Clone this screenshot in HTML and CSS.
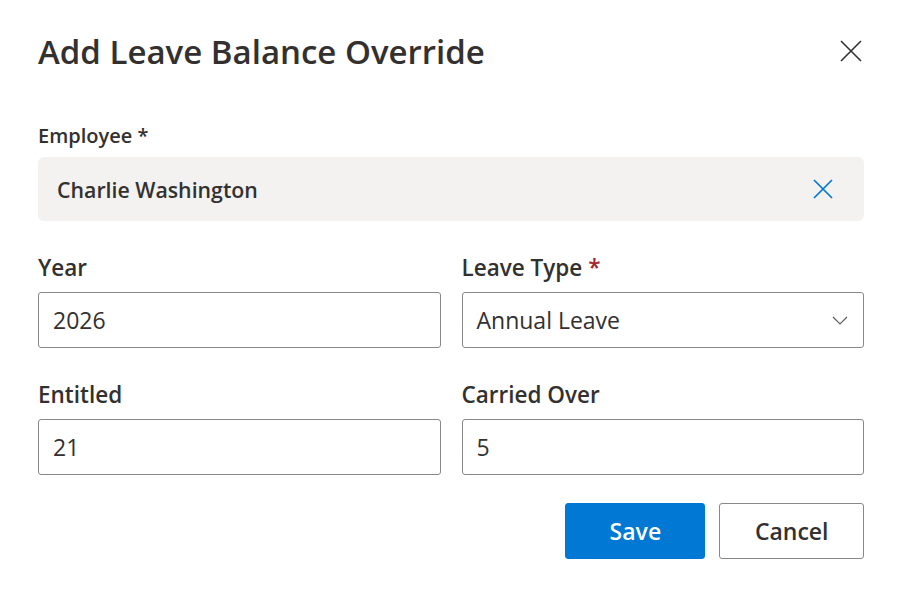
FILE: index.html
```html
<!DOCTYPE html>
<html lang="en">
<head>
    <meta charset="UTF-8">
    <meta name="viewport" content="width=device-width, initial-scale=1.0">
    <title>Add Leave Balance Override</title>
    <link rel="stylesheet" href="styles.css">
</head>
<body>
    <div class="dialog">
        <div class="dialog-header">
            <h1>Add Leave Balance Override</h1>
            <button class="close-btn" aria-label="Close">
                <svg width="22" height="22" viewBox="0 0 22 22"><path d="M1 1 L21 21 M21 1 L1 21" stroke="#323130" stroke-width="1.6" fill="none"/></svg>
            </button>
        </div>

        <div class="field">
            <label class="label-small">Employee *</label>
            <div class="picker">
                <span class="picker-value">Charlie Washington</span>
                <svg width="20" height="20" viewBox="0 0 20 20"><path d="M1 1 L19 19 M19 1 L1 19" stroke="#0078d4" stroke-width="1.7" fill="none"/></svg>
            </div>
        </div>

        <div class="row">
            <div class="field">
                <label>Year</label>
                <div class="input">2026</div>
            </div>
            <div class="field">
                <label>Leave Type <span class="required">*</span></label>
                <div class="input dropdown">
                    <span>Annual Leave</span>
                    <svg width="16" height="9" viewBox="0 0 16 9"><path d="M1 1 L8 8 L15 1" stroke="#605e5c" stroke-width="1.2" fill="none"/></svg>
                </div>
            </div>
        </div>

        <div class="row">
            <div class="field">
                <label>Entitled</label>
                <div class="input">21</div>
            </div>
            <div class="field">
                <label>Carried Over</label>
                <div class="input">5</div>
            </div>
        </div>

        <div class="actions">
            <button class="btn primary">Save</button>
            <button class="btn">Cancel</button>
        </div>
    </div>
</body>
</html>
```

FILE: styles.css
```css
body {
    margin: 0;
    background: #fff;
    font-family: "Open Sans", "Noto Sans", sans-serif;
    color: #323130;
}

.dialog {
    padding: 26px 36px 0 38px;
}

.dialog-header {
    display: flex;
    justify-content: space-between;
    align-items: center;
    height: 50px;
    margin-bottom: 46px;
}

.dialog-header h1 {
    margin: 0;
    font-size: 33px;
    font-weight: 600;
}

.close-btn {
    background: none;
    border: none;
    padding: 0;
    margin-right: 2px;
    display: flex;
}

.field {
    display: flex;
    flex-direction: column;
}

label {
    font-size: 22.5px;
    font-weight: 600;
    line-height: 32px;
    margin-bottom: 8px;
}

.label-small {
    font-size: 20px;
    line-height: 28px;
    margin-bottom: 7px;
}

.required {
    color: #a4262c;
}

.picker {
    display: flex;
    justify-content: space-between;
    align-items: center;
    height: 64px;
    box-sizing: border-box;
    padding: 0 31px 0 19px;
    background: #f3f2f1;
    border-radius: 6px;
    font-size: 21.3px;
    font-weight: 600;
}

.row {
    display: grid;
    grid-template-columns: 1fr 1fr;
    gap: 21px;
    margin-top: 31px;
}

.input {
    height: 56px;
    box-sizing: border-box;
    border: 1px solid #8a8886;
    border-radius: 3px;
    padding: 0 14px;
    display: flex;
    align-items: center;
    font-size: 23px;
}

.dropdown {
    justify-content: space-between;
    padding-right: 15px;
}

.actions {
    display: flex;
    justify-content: flex-end;
    gap: 14px;
    margin-top: 28px;
}

.btn {
    height: 56px;
    min-width: 140px;
    padding: 0 34.5px;
    border: 1px solid #8a8886;
    border-radius: 3px;
    background: #fff;
    color: #323130;
    font-family: inherit;
    font-size: 23px;
    font-weight: 600;
}

.btn.primary {
    background: #0078d4;
    border-color: #0078d4;
    color: #fff;
}
```
